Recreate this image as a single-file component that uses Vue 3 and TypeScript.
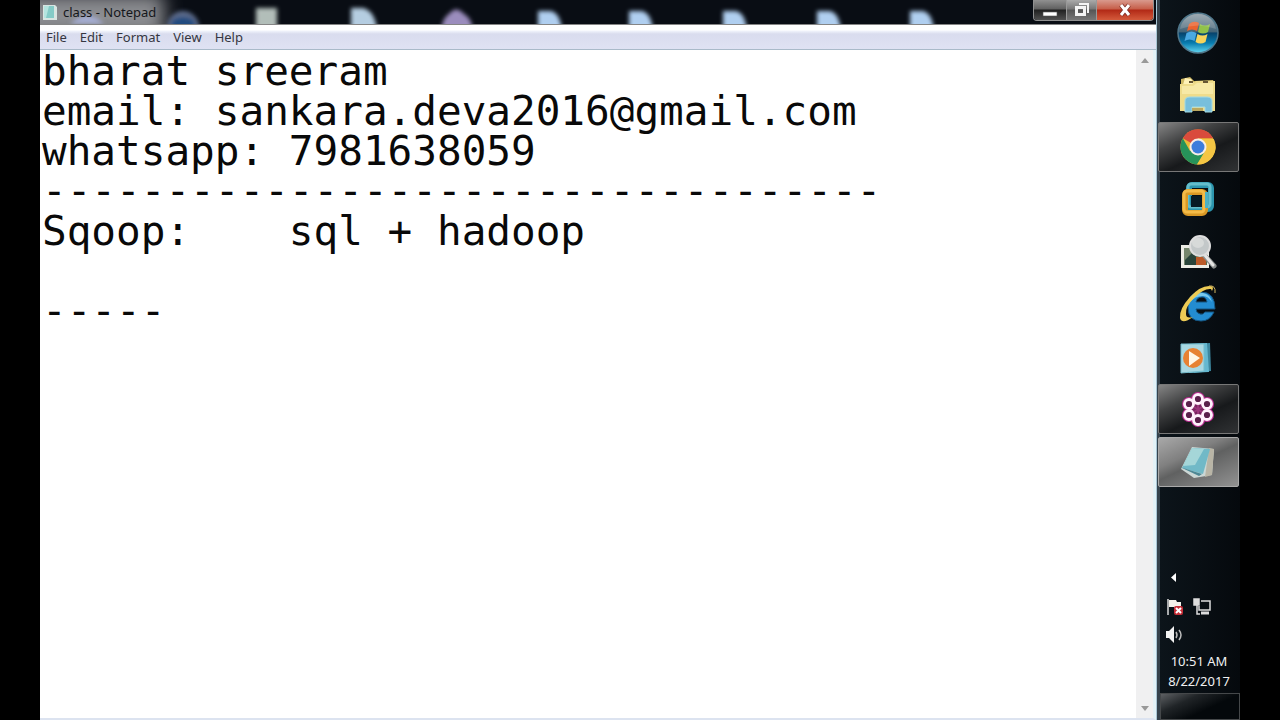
<script setup lang="ts">
import { ref } from 'vue'

interface App {
  id: string
  label: string
  state: 'pinned' | 'running' | 'active'
}

const note = ref<string>(
  [
    'bharat sreeram',
    'email: sankara.deva2016@gmail.com',
    'whatsapp: 7981638059',
    '-'.repeat(34),
    'Sqoop:    sql + hadoop',
    '',
    '-----',
  ].join('\n'),
)

const menus: string[] = ['File', 'Edit', 'Format', 'View', 'Help']

const apps: App[] = [
  { id: 'explorer', label: 'Windows Explorer', state: 'pinned' },
  { id: 'chrome', label: 'Google Chrome', state: 'running' },
  { id: 'vmware', label: 'VMware', state: 'pinned' },
  { id: 'viewer', label: 'Image viewer', state: 'pinned' },
  { id: 'ie', label: 'Internet Explorer', state: 'pinned' },
  { id: 'player', label: 'Media Player', state: 'pinned' },
  { id: 'meeting', label: 'GoToMeeting', state: 'running' },
  { id: 'notepad', label: 'Notepad', state: 'active' },
]

const documents: number[] = [510, 601, 695, 789, 882]
</script>

<template>
  <div class="screen">
    <main class="window">
      <header class="titlebar">
        <svg class="backdrop" width="1118" height="24" viewBox="0 0 1118 24" aria-hidden="true">
          <defs>
            <filter id="soft" x="-30%" y="-30%" width="160%" height="160%"><feGaussianBlur stdDeviation="2" /></filter>
            <filter id="haze" x="-30%" y="-80%" width="160%" height="260%"><feGaussianBlur stdDeviation="9" /></filter>
          </defs>
          <rect x="-20" y="-6" width="144" height="44" fill="#8b8c90" filter="url(#haze)" />
          <g filter="url(#soft)">
            <path d="M30 24Q48 7 64 24z" fill="#a5add2" />
            <circle cx="143" cy="27" r="16" fill="#5b6b8a" />
            <ellipse cx="143" cy="24" rx="12" ry="7" fill="#244b7f" />
            <path d="M216 8h21v22h-21z" fill="#b2beb9" />
            <path d="M311 8h12q12 3 14 22h-26z" fill="#b5cde1" />
            <path d="M401 30q2-13 8-16 7-9 15 0 7 3 9 16z" fill="#9b8dbd" />
            <path v-for="x in documents" :key="x" :d="`M${x - 12} 11h13q9 2 11 19h-24z`" fill="#b0cff0" />
          </g>
        </svg>
        <svg class="file-icon" width="16" height="18" viewBox="0 0 16 18" aria-hidden="true">
          <path d="M1 1h12l2 2v13H1z" fill="#d8e5e2" />
          <path d="M2 2h10v12H2z" fill="#84cbc7" />
          <path d="M2 2h5L4 14H2z" fill="#b4e4df" />
        </svg>
        <h1>class - Notepad</h1>
        <div class="controls">
          <button class="minimize" type="button" aria-label="Minimize">
            <svg width="18" height="18" viewBox="0 0 18 18"><path d="M2 12h14v4H2z" fill="#fff" stroke="#555" stroke-width=".6" /></svg>
          </button>
          <button class="restore" type="button" aria-label="Restore">
            <svg width="18" height="18" viewBox="0 0 18 18" fill="none" stroke="#f4f4f4"><path d="M6 4h9v9" stroke-width="2" /><path d="M3.500 7.500h8v7h-8z" stroke-width="3" /></svg>
          </button>
          <button class="close" type="button" aria-label="Close">
            <svg width="18" height="18" viewBox="0 0 18 18"><path d="M5 5l8 10M13 5L5 15" stroke="#7c2d25" stroke-width="4.500" /><path d="M5 5l8 10M13 5L5 15" stroke="#fff" stroke-width="3" /></svg>
          </button>
        </div>
      </header>

      <nav class="menubar" aria-label="Notepad menu">
        <button v-for="menu in menus" :key="menu" type="button">{{ menu }}</button>
      </nav>

      <div class="document">
        <textarea v-model="note" aria-label="Document text" spellcheck="false"></textarea>
        <div class="scrollbar">
          <button type="button" aria-label="Scroll up">
            <svg width="10" height="6" viewBox="0 0 10 6"><path d="M5 0l4 5H1z" fill="#999" /></svg>
          </button>
          <button type="button" aria-label="Scroll down">
            <svg width="10" height="6" viewBox="0 0 10 6"><path d="M1 1h8L5 6z" fill="#999" /></svg>
          </button>
        </div>
      </div>
    </main>

    <aside class="taskbar" aria-label="Taskbar">
      <button class="start" type="button" aria-label="Start">
        <svg width="44" height="44" viewBox="0 0 44 44">
          <defs>
            <linearGradient id="orb" x2="0" y2="1"><stop stop-color="#8f9da6" /><stop offset=".47" stop-color="#436477" /><stop offset=".5" stop-color="#07436c" /><stop offset=".75" stop-color="#087caf" /><stop offset="1" stop-color="#64d8f2" /></linearGradient>
          </defs>
          <circle cx="22" cy="22" r="20" fill="url(#orb)" stroke="#50788c" stroke-width="1.500" />
          <path d="M13 13q5-4 10-1l-2 8q-5-3-10 0z" fill="#e96330" />
          <path d="M24 13q5 3 10 0l-2 8q-5 3-10 0z" fill="#91c24a" />
          <path d="M10.500 22q5-3 10 0l-2 8q-5-3-10 0z" fill="#4aa9e3" />
          <path d="M21.500 23q5 3 10 0l-2 8q-5 3-10 0z" fill="#f8d45b" />
          <path d="M4 18Q7 4 22 3q15 1 18 15-18-7-36 0z" fill="#fff" opacity=".16" />
        </svg>
      </button>

      <div class="apps">
        <button v-for="app in apps" :key="app.id" type="button" :class="app.state" :aria-label="app.label">
          <svg v-if="app.id === 'explorer'" width="44" height="44" viewBox="0 0 44 44">
            <path d="M5 7l9-2 4 4 19-1 2 4v26H5z" fill="#cfb964" />
            <path d="M9 6l6 1 3 4h19v5H6z" fill="#fff2b7" />
            <path d="M4 12h12l4-3h19v30H4z" fill="#efdc8b" />
            <path d="M6 14h11l4-3h16v11H6z" fill="#f7e9a6" />
            <path d="M13 9h4v2h-4zM27 9h5v2h-5z" fill="#665633" />
            <path d="M9 40V29q0-4 5-4h17q5 0 5 4v11h-7v-5H16v5z" fill="#78bfdc" stroke="#a4dbe4" stroke-width="1" />
            <path d="M16 36h11v3H16z" fill="#bba85f" />
          </svg>
          <svg v-else-if="app.id === 'chrome'" width="44" height="44" viewBox="0 0 44 44">
            <circle cx="22" cy="22" r="17.500" fill="#e9ba35" />
            <path d="M22 22L6.800 13.200A17.500 17.500 0 0 1 37.200 13.200H22z" fill="#d94b3c" />
            <path d="M6.800 13.200A17.500 17.500 0 0 0 21 39.500L30 26 22 22 14 26z" fill="#27935a" />
            <path d="M22 14h15.600A17.500 17.500 0 0 1 21 39.500l8-13.500z" fill="#f4c644" />
            <circle cx="22" cy="22" r="8.500" fill="#f7eee5" />
            <circle cx="22" cy="22" r="6.500" fill="#3d7ddc" />
          </svg>
          <svg v-else-if="app.id === 'vmware'" width="44" height="44" viewBox="0 0 44 44" fill="none">
            <rect x="13" y="8" width="22" height="24" rx="3" stroke="#2c95ad" stroke-width="6" />
            <rect x="12" y="7" width="22" height="23" rx="3" stroke="#64bdcb" stroke-width="3" />
            <rect x="9" y="15" width="20" height="21" rx="3" stroke="#d99825" stroke-width="6" />
            <rect x="8" y="14" width="20" height="21" rx="3" stroke="#f4bb48" stroke-width="3" />
            <path d="M15 19h11v11H15z" fill="#071b25" />
            <path d="M29 15h3v16h-3z" fill="#4cb1c3" />
          </svg>
          <svg v-else-if="app.id === 'viewer'" width="44" height="44" viewBox="0 0 44 44">
            <path d="M5 15h28v23H5z" fill="#ecece5" />
            <path d="M8 18h23v17H8z" fill="#596d49" />
            <path d="M8 18h9v17H8z" fill="#75866c" />
            <path d="M9 30l8-8 8 13H9z" fill="#29443a" />
            <path d="M20 27h10v8H20z" fill="#bb5a28" />
            <path d="M29 26l9 10" stroke="#898d8d" stroke-width="5" stroke-linecap="round" />
            <path d="M28 24l9 11" stroke="#e4e4e3" stroke-width="3" stroke-linecap="round" />
            <circle cx="24" cy="16" r="10" fill="#c3c8c9" stroke="#dedede" stroke-width="2" />
            <ellipse cx="22" cy="13" rx="6" ry="5" fill="#e5e6e4" opacity=".6" />
          </svg>
          <svg v-else-if="app.id === 'ie'" width="44" height="44" viewBox="0 0 44 44">
            <path d="M12 25q0 14 13 14 9 0 13-9h-9q-2 3-5 2-4-1-4-5h19q0-17-14-17-13 0-13 15zm8-5q1-5 6-5 4 0 5 5z" fill="#238cd1" stroke="#145581" stroke-width="1" />
            <path d="M14 20q3-10 13-9 7 1 9 9-4-6-9-6-8 0-13 6z" fill="#77c8ec" />
            <path d="M36 9q3-5-3-5Q24 4 14 15 3 27 4 36q2 7 13-1-7 2-7-3-1-7 8-16 10-10 17-9z" fill="#edcb55" />
            <path d="M33 4q7-1 6 7" fill="none" stroke="#d3b662" stroke-width="1" />
          </svg>
          <svg v-else-if="app.id === 'player'" width="44" height="44" viewBox="0 0 44 44">
            <path d="M13 9l21-1 1 28-17 2z" fill="#3d879f" />
            <path d="M9 9l22-1 2 29-20 1z" fill="#65b8d0" />
            <path d="M5 9h23v27l-23 2z" fill="#a9d8e2" stroke="#76bdcd" />
            <circle cx="17" cy="23" r="10" fill="#e78233" />
            <path d="M13 16l11 7-11 8z" fill="#fff7e8" />
          </svg>
          <svg v-else-if="app.id === 'meeting'" width="44" height="44" viewBox="0 0 44 44" fill="none">
            <g stroke="#b92d91" stroke-width="5"><circle cx="22" cy="12" r="4.500" /><circle cx="31" cy="17" r="4.500" /><circle cx="31" cy="28" r="4.500" /><circle cx="22" cy="33" r="4.500" /><circle cx="13" cy="28" r="4.500" /><circle cx="13" cy="17" r="4.500" /></g>
            <circle cx="22" cy="22.500" r="6" fill="#78245f" />
            <g fill="#5a1f4b" stroke="#fff1fc" stroke-width="2.800"><circle cx="22" cy="12" r="4.500" /><circle cx="31" cy="17" r="4.500" /><circle cx="31" cy="28" r="4.500" /><circle cx="22" cy="33" r="4.500" /><circle cx="13" cy="28" r="4.500" /><circle cx="13" cy="17" r="4.500" /></g>
            <path d="M22 18v9M18 20l8 5M26 20l-8 5" stroke="#9b357c" stroke-width="2" />
          </svg>
          <svg v-else width="44" height="44" viewBox="0 0 44 44">
            <path d="M16 7l22 2-2 26-18 3-13-9z" fill="#cbd7d5" />
            <path d="M33 8l5 1-2 26-7 2z" fill="#b9b5a6" />
            <path d="M16 8l18 1-7 25-21-6z" fill="#71b9c7" />
            <path d="M16 8l12 1-9 16-12 1z" fill="#a5d6d8" />
            <path d="M4 27l22 7-3 2z" fill="#4d8794" />
          </svg>
        </button>
      </div>

      <footer class="tray">
        <div class="tray-icons">
          <button type="button" aria-label="Show hidden icons"><svg width="20" height="20" viewBox="0 0 20 20"><path d="M12 4v9l-5-4.500z" fill="#fff" /></svg></button>
          <button class="row-start" type="button" aria-label="Action Center">
            <svg width="20" height="20" viewBox="0 0 20 20"><path d="M4 2v16" stroke="#ddd" stroke-width="1.500" /><path d="M5 3h7l1 2h4v7h-6l-1-2H5z" fill="#f3f0e9" /><rect x="10" y="9" width="9" height="9" rx="2" fill="#c52d36" /><path d="M12 11l5 5M17 11l-5 5" stroke="#fff" stroke-width="2" /></svg>
          </button>
          <button type="button" aria-label="Network"><svg width="20" height="20" viewBox="0 0 20 20" fill="none" stroke="#ddd" stroke-width="1.500"><path d="M9 4h9v9H7V9" /><path d="M9 16h8" stroke-width="3" /><path d="M2 2h5v6H2z" fill="#ddd" /><path d="M5 8v9h3" /></svg></button>
          <button class="row-start" type="button" aria-label="Volume"><svg width="20" height="20" viewBox="0 0 20 20"><path d="M2 6h3l5-5v17l-5-5H2z" fill="#f2f2f2" /><path d="M12 7q2 3 0 6M15 5q4 5 0 10" fill="none" stroke="#bbb" stroke-width="1.500" /></svg></button>
        </div>
        <time datetime="2017-08-22T10:51"><span>10:51 AM</span><span>8/22/2017</span></time>
        <button class="show-desktop" type="button" aria-label="Show desktop"></button>
      </footer>
    </aside>
  </div>
</template>

<style>
html,
body {
  margin: 0;
  background: #000;
}
</style>

<style scoped>
* {
  box-sizing: border-box;
}

button {
  margin: 0;
  padding: 0;
  border: 0;
  background: none;
  color: inherit;
  font: inherit;
}

svg {
  display: block;
}

.screen {
  display: flex;
  height: 100vh;
  padding: 0 40px;
  background: #000;
  font-family: "Noto Sans", "Open Sans", sans-serif;
}

.window {
  display: flex;
  flex: 1;
  flex-direction: column;
  min-width: 0;
  border-right: 1px solid #a8c5d5;
}

.titlebar {
  position: relative;
  display: flex;
  flex: none;
  gap: 5px;
  height: 25px;
  padding-left: 2px;
  overflow: hidden;
  border-bottom: 1px solid #858585;
  background: #090d14;
}

.backdrop {
  position: absolute;
  inset: 0;
}

.file-icon {
  position: relative;
  margin-top: 4px;
}

h1 {
  position: relative;
  flex: 1;
  margin: 0;
  color: #15171b;
  font-size: 13px;
  font-weight: 400;
  line-height: 25px;
}

.controls {
  position: relative;
  display: flex;
  height: 21px;
  margin-right: 2px;
  border: 1px solid #909090;
  border-top: 0;
  border-radius: 0 0 4px 4px;
  overflow: hidden;
}

.controls button {
  display: flex;
  justify-content: center;
  width: 33px;
  border-right: 1px solid #999;
  background: linear-gradient(#909090, #606060 45%, #202020 50%, #505050);
}

.controls .restore {
  width: 30px;
  background: linear-gradient(#aaa, #777 45%, #555 50%, #777);
}

.controls .close {
  width: 56px;
  border-right: 0;
  background: linear-gradient(#d99a8d, #c65e49 45%, #b22916 50%, #d45a3b);
}

.menubar {
  display: flex;
  flex: none;
  gap: 13px;
  height: 25px;
  padding-left: 6px;
  border-bottom: 1px solid #a9bac9;
  background: linear-gradient(#fff 0 5px, #f0f3fb 6px, #d9dcee 9px, #dfe2f3);
  color: #353641;
  font-size: 13px;
  line-height: 25px;
}

.document {
  display: flex;
  flex: 1;
  min-height: 0;
  border-right: 3px solid #e3f2f7;
  border-bottom: 2px solid #dce3f0;
  background: #fff;
}

textarea {
  flex: 1;
  min-width: 0;
  margin: 0;
  padding: 1px 0 0 2px;
  overflow: hidden;
  border: 0;
  outline: 0;
  resize: none;
  background: #fff;
  color: #090909;
  font-family: "DejaVu Sans Mono", "Liberation Mono", monospace;
  font-size: 41px;
  line-height: 40px;
  white-space: pre;
}

.scrollbar {
  display: flex;
  flex-direction: column;
  justify-content: space-between;
  width: 17px;
  padding: 8px 0 7px;
  background: #f0f0f1;
}

.scrollbar button {
  display: flex;
  justify-content: center;
}

.taskbar {
  display: flex;
  flex: none;
  flex-direction: column;
  width: 83px;
  border-left: 3px solid #35424c;
  background: linear-gradient(90deg, #0c141a, #05090d);
  color: #f1f1f1;
}

.start {
  display: flex;
  flex: none;
  align-items: center;
  justify-content: center;
  height: 65px;
  padding-right: 4px;
}

.apps {
  display: flex;
  flex: none;
  flex-direction: column;
  justify-content: space-between;
  height: 418px;
  margin: 4px 1px 0 -2px;
}

.apps button {
  display: flex;
  align-items: center;
  justify-content: center;
  height: 50px;
  padding-right: 2px;
  border: 1px solid transparent;
  border-radius: 2px;
}

.apps .running {
  border-color: #777;
  background: linear-gradient(155deg, #858585, #414243 32%, #17191b 60%, #303234);
}

.apps .active {
  border-color: #aaa;
  background: linear-gradient(155deg, #a8a8a8, #808080 35%, #606161 50%, #929292);
}

.tray {
  display: flex;
  flex: none;
  flex-direction: column;
  margin-top: auto;
}

.tray-icons {
  display: grid;
  grid-template-columns: 20px 20px;
  gap: 8px;
  margin-left: 4px;
}

.row-start {
  grid-column: 1;
}

time {
  display: flex;
  flex-direction: column;
  margin: 6px 0 2px;
  padding-right: 2px;
  font-size: 13px;
  line-height: 20px;
  text-align: center;
}

.show-desktop {
  height: 27px;
  border: 1px solid #45484a;
  background: linear-gradient(155deg, #5d6063, #202427 30%, #04080b 60%);
}
</style>
